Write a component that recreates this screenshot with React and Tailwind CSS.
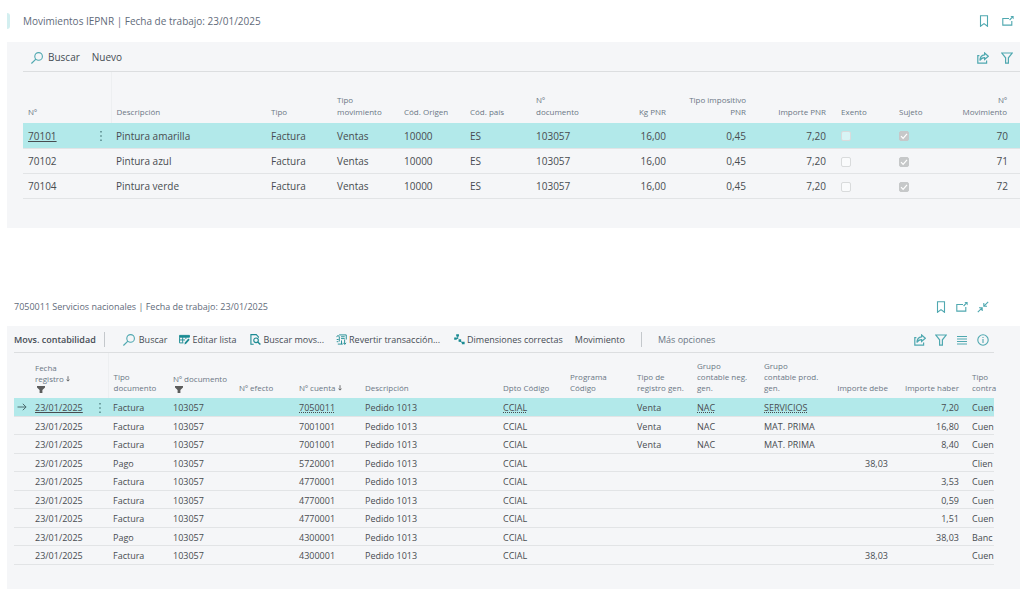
import clsx from 'clsx'

const entries = [
  { no: '70101', description: 'Pintura amarilla', entryNo: '70' },
  { no: '70102', description: 'Pintura azul', entryNo: '71' },
  { no: '70104', description: 'Pintura verde', entryNo: '72' },
]

const ledger = [
  { type: 'Factura', account: '7050011', genType: 'Venta', bus: 'NAC', prod: 'SERVICIOS', credit: '7,20', balance: 'Cuen' },
  { type: 'Factura', account: '7001001', genType: 'Venta', bus: 'NAC', prod: 'MAT. PRIMA', credit: '16,80', balance: 'Cuen' },
  { type: 'Factura', account: '7001001', genType: 'Venta', bus: 'NAC', prod: 'MAT. PRIMA', credit: '8,40', balance: 'Cuen' },
  { type: 'Pago', account: '5720001', debit: '38,03', balance: 'Clien' },
  { type: 'Factura', account: '4770001', credit: '3,53', balance: 'Cuen' },
  { type: 'Factura', account: '4770001', credit: '0,59', balance: 'Cuen' },
  { type: 'Factura', account: '4770001', credit: '1,51', balance: 'Cuen' },
  { type: 'Pago', account: '4300001', credit: '38,03', balance: 'Banc' },
  { type: 'Factura', account: '4300001', debit: '38,03', balance: 'Cuen' },
]

function Icon({ children, className = 'size-3', strokeWidth = 1 }) {
  return (
    <svg
      viewBox="0 0 12 12"
      className={clsx('shrink-0', className)}
      fill="none"
      stroke="currentColor"
      strokeWidth={strokeWidth}
      aria-hidden="true"
    >
      {children}
    </svg>
  )
}

const SearchIcon = () => (
  <Icon strokeWidth={1.1}>
    <circle cx="7.6" cy="4.4" r="3.8" />
    <path d="M4.9 7.1L.4 11.5" />
  </Icon>
)

const BookmarkIcon = () => (
  <Icon strokeWidth={1.1}>
    <path d="M2.5.7h7v10.6L6 8.6l-3.5 2.7z" />
  </Icon>
)

const PopOutIcon = () => (
  <Icon strokeWidth={1.1}>
    <path d="M7 3.5H.8v6.6h9V6" />
    <path d="M7.6 5l2.6-2.6" />
    <path d="M8.4 1h3.2v3.2z" fill="currentColor" stroke="none" />
  </Icon>
)

const CollapseIcon = () => (
  <Icon strokeWidth={1.1}>
    <path d="M.8 11.2l4-4M2 6.8h3.2V10M11.2.8l-4 4M6.8 2v3.2H10" />
  </Icon>
)

const ShareIcon = () => (
  <Icon strokeWidth={1.2}>
    <path d="M2.4 3.6H.8v7.6h8.8V8.6" />
    <path d="M7.6 1l3.7 3.2-3.7 3.2V5.6C5.4 5.6 4 6.4 2.9 8.6 3 5 4.8 3 7.6 2.8z" />
  </Icon>
)

const FilterIcon = () => (
  <Icon strokeWidth={1.2}>
    <path d="M.8 1h10.4L7.4 5.8v5.4H4.6V5.8z" />
  </Icon>
)

const ListIcon = () => (
  <Icon strokeWidth={1.1}>
    <path d="M1 2.5h10M1 5h10M1 7.5h10M1 10h10" />
  </Icon>
)

const InfoIcon = () => (
  <Icon strokeWidth={1.1}>
    <circle cx="6" cy="6" r="5.2" />
    <path d="M6 5v4M6 3v1" />
  </Icon>
)

const EditListIcon = () => (
  <Icon className="size-[11px] text-[#1b8b93]">
    <path d="M.6 1.5h10.8v2H.6z" fill="currentColor" />
    <path d="M.6 3.5v6.2h4.2M.6 6.5h6M4 3.5v6M7.5 3.5v2" />
    <path d="M6 11.4l.4-2L10.2 5l1.4 1.3-3.8 4.3z" fill="currentColor" stroke="none" />
  </Icon>
)

const FindEntriesIcon = () => (
  <Icon className="size-[11px] text-[#1b8b93]" strokeWidth={1.2}>
    <path d="M4 11.2H1V.7h5.8l2.4 2.5v1" />
    <circle cx="6.6" cy="6.9" r="2.5" />
    <path d="M8.4 8.7l2.9 2.7" strokeWidth="1.6" />
  </Icon>
)

const ReverseIcon = () => (
  <Icon className="size-[11px] text-[#1b8b93]">
    <path d="M3.4 1h7.8v5M5.5 3h4M5.5 5h4M3.6 3.2v5M9.4 6v4.8M6 7v4" />
    <path d="M.6 3.4l1.6-2 1.6 2M.8 6h2M.8 8.4h1.8M2 11h5.4M8 9.6l1.5 1.8L11 9.6" />
  </Icon>
)

const DimensionsIcon = () => (
  <Icon className="size-[11px] text-[#1b8b93]">
    <path d="M4 2v3M1.6 4.8h3M5.4 7.2l4.4 2.6" />
    <path d="M2.4.4h3v2.4h-3zM.2 3.8h2.8v2.4H.2zM5 5.8h2.8v2.6H5zM8.6 8.4h3v2.8h-3z" fill="currentColor" stroke="none" />
  </Icon>
)

const FunnelMark = () => (
  <svg viewBox="0 0 8 7" className="mt-0.5 ml-0.5 h-[7px] w-2" aria-hidden="true">
    <path d="M0 0h8v1.4L5.4 4v3H2.6V4L0 1.4z" fill="#5c5c5c" />
  </svg>
)

const SortArrow = () => (
  <svg viewBox="0 0 5 7" className="ml-0.5 inline h-1.5 w-1" fill="none" stroke="#505050" aria-hidden="true">
    <path d="M2.5 0v6M.5 4.2l2 2 2-2" />
  </svg>
)

const RowArrow = () => (
  <svg viewBox="0 0 10 8" className="mx-auto h-2 w-2.5" fill="none" stroke="#4b6b6e" aria-hidden="true">
    <path d="M.5 4h8.6M5.8.8L9.1 4 5.8 7.2" />
  </svg>
)

function RowMenu() {
  return (
    <button className="flex w-1.5 justify-center" aria-label="Más acciones">
      <svg viewBox="0 0 2 10" className="h-2.5 w-0.5" fill="#3f6e70" aria-hidden="true">
        <path d="M.4 0h1.2v1.4H.4zM.4 4.3h1.2v1.4H.4zM.4 8.6h1.2V10H.4z" />
      </svg>
    </button>
  )
}

function IconButton({ label, children }) {
  return (
    <button aria-label={label} className="text-[#4fa8b0]">
      {children}
    </button>
  )
}

function Action({ icon, children, className }) {
  return (
    <button className={clsx('flex items-center whitespace-nowrap', className)}>
      {icon}
      {children}
    </button>
  )
}

function Th({ children, className }) {
  return <th className={clsx('px-[5px] align-bottom font-normal', className || 'text-left')}>{children}</th>
}

function Td({ children, className }) {
  return <td className={clsx('px-[5px] pt-0.5 whitespace-nowrap', className)}>{children}</td>
}

function Check({ checked, label }) {
  return (
    <span className="grid size-2.5">
      <input
        type="checkbox"
        checked={checked}
        disabled
        aria-label={label}
        className={clsx(
          'col-start-1 row-start-1 size-2.5 appearance-none rounded-xs border',
          checked ? 'border-[#c6c8c9] bg-[#c6c8c9]' : 'border-[#d9dbdc] bg-white/50'
        )}
      />
      {checked && (
        <svg viewBox="0 0 10 10" className="col-start-1 row-start-1 size-2.5" fill="none" stroke="#fff" aria-hidden="true">
          <path d="M2 5.2l2.1 2.1L8 2.8" strokeWidth="1.2" />
        </svg>
      )}
    </span>
  )
}

function PlasticTaxEntries() {
  return (
    <section>
      <header className="flex h-[42px] items-center justify-between pr-1.5">
        <div className="flex items-center">
          <span className="ml-[7px] h-4 w-[3px] rounded-r-full bg-[#d3eff0]" />
          <h1 className="ml-[13px] text-[10px] text-[#5f6b7a]">Movimientos IEPNR | Fecha de trabajo: 23/01/2025</h1>
        </div>
        <div className="flex gap-3">
          <IconButton label="Marcador"><BookmarkIcon /></IconButton>
          <IconButton label="Abrir en ventana nueva"><PopOutIcon /></IconButton>
        </div>
      </header>

      <div className="ml-[7px] bg-[#f5f6f8] pb-[29px] pl-4">
        <div className="flex h-[30px] items-center justify-between border-b border-[#dcdee0] pt-0.5 pr-[7px] pl-2 text-[10px]">
          <div className="flex gap-3 text-[#454c54]">
            <Action className="gap-[5px]" icon={<span className="text-[#4fa8b0]"><SearchIcon /></span>}>Buscar</Action>
            <Action>Nuevo</Action>
          </div>
          <div className="flex gap-3">
            <IconButton label="Compartir"><ShareIcon /></IconButton>
            <IconButton label="Filtrar"><FilterIcon /></IconButton>
          </div>
        </div>

        <table className="w-full table-fixed text-[10px] text-[#484c50]">
          <colgroup>
            <col className="w-[70px]" />
            <col className="w-[18px]" />
            <col />
            <col className="w-[66px]" />
            <col className="w-[67px]" />
            <col className="w-[66px]" />
            <col className="w-[66px]" />
            <col className="w-[65px]" />
            <col className="w-[75px]" />
            <col className="w-[80px]" />
            <col className="w-[80px]" />
            <col className="w-[63px]" />
            <col className="w-[52px]" />
            <col className="w-[74px]" />
          </colgroup>
          <thead>
            <tr className="h-[51px] text-[8px] leading-3 text-[#6b7685] [&>th]:pb-[5px]">
              <Th>Nº</Th>
              <Th className="border-r border-[#edeff1]" />
              <Th>Descripción</Th>
              <Th>Tipo</Th>
              <Th>Tipo<br />movimiento</Th>
              <Th>Cód. Origen</Th>
              <Th>Cód. país</Th>
              <Th>Nº<br />documento</Th>
              <Th className="text-right">Kg PNR</Th>
              <Th className="text-right whitespace-nowrap">Tipo impositivo<br />PNR</Th>
              <Th className="text-right">Importe PNR</Th>
              <Th className="pl-2.5 text-left">Exento</Th>
              <Th>Sujeto</Th>
              <Th className="pr-[13px] text-right">Nº<br />Movimiento</Th>
            </tr>
          </thead>
          <tbody>
            {entries.map((entry, i) => (
              <tr key={entry.no} className={clsx('h-[25px] border-b border-[#e2e4e6]', i === 0 && 'bg-[#b2e9ea]')}>
                <Td>{i === 0 ? <a href="#70101" className="underline">{entry.no}</a> : entry.no}</Td>
                <Td>{i === 0 && <RowMenu />}</Td>
                <Td>{entry.description}</Td>
                <Td>Factura</Td>
                <Td>Ventas</Td>
                <Td>10000</Td>
                <Td>ES</Td>
                <Td>103057</Td>
                <Td className="text-right">16,00</Td>
                <Td className="text-right">0,45</Td>
                <Td className="text-right">7,20</Td>
                <Td className="pl-2.5"><Check checked={false} label={`Exento ${entry.no}`} /></Td>
                <Td><Check checked label={`Sujeto ${entry.no}`} /></Td>
                <Td className="pr-3 text-right">{entry.entryNo}</Td>
              </tr>
            ))}
          </tbody>
        </table>
      </div>
    </section>
  )
}

function LedgerEntries() {
  const link = 'underline decoration-dotted underline-offset-1'

  return (
    <section className="mt-[60px]">
      <header className="flex h-[38px] items-center justify-between pr-[31px] pl-3.5">
        <h2 className="text-[9px] text-[#5f6b7a]">7050011 Servicios nacionales | Fecha de trabajo: 23/01/2025</h2>
        <div className="flex gap-[9px]">
          <IconButton label="Marcador"><BookmarkIcon /></IconButton>
          <IconButton label="Abrir en ventana nueva"><PopOutIcon /></IconButton>
          <IconButton label="Contraer"><CollapseIcon /></IconButton>
        </div>
      </header>

      <div className="ml-[7px] bg-[#f5f6f8] pr-[26px] pb-[25px] pl-[7px]">
        <div className="flex h-[27px] items-center justify-between border-b border-[#dcdee0] pt-0.5 pr-[5px] text-[9px] text-[#454c54]">
          <div className="flex items-center">
            <h3 className="font-semibold whitespace-nowrap">Movs. contabilidad</h3>
            <span className="mr-[18px] ml-2 h-[15px] w-px bg-[#c4c8cc]" />
            <Action className="mr-3 gap-1" icon={<span className="text-[#4fa8b0]"><SearchIcon /></span>}>Buscar</Action>
            <Action className="mr-3.5 gap-0.5" icon={<EditListIcon />}>Editar lista</Action>
            <Action className="mr-3 gap-0.5" icon={<FindEntriesIcon />}>Buscar movs...</Action>
            <Action className="mr-3.5 gap-0.5" icon={<ReverseIcon />}>Revertir transacción...</Action>
            <Action className="mr-3 gap-0.5" icon={<DimensionsIcon />}>Dimensiones correctas</Action>
            <Action>Movimiento</Action>
            <span className="mx-4 h-[15px] w-px bg-[#c4c8cc]" />
            <Action className="text-[#6b7685]">Más opciones</Action>
          </div>
          <div className="flex gap-[9px]">
            <IconButton label="Compartir"><ShareIcon /></IconButton>
            <IconButton label="Filtrar"><FilterIcon /></IconButton>
            <IconButton label="Vista de lista"><ListIcon /></IconButton>
            <IconButton label="Información"><InfoIcon /></IconButton>
          </div>
        </div>

        <table className="w-full table-fixed text-[9px] text-[#484c50]">
          <colgroup>
            <col className="w-4" />
            <col className="w-[62px]" />
            <col className="w-4" />
            <col className="w-[60px]" />
            <col className="w-[66px]" />
            <col className="w-[60px]" />
            <col className="w-[66px]" />
            <col />
            <col className="w-[67px]" />
            <col className="w-[67px]" />
            <col className="w-[60px]" />
            <col className="w-[67px]" />
            <col className="w-[67px]" />
            <col className="w-[67px]" />
            <col className="w-[71px]" />
            <col className="w-[30px]" />
          </colgroup>
          <thead>
            <tr className="h-[45px] text-[8px] leading-[11px] text-[#6b7685] [&>th]:pb-[5px] [&>th]:whitespace-nowrap">
              <Th />
              <Th>Fecha<br />registro<SortArrow /><FunnelMark /></Th>
              <Th className="border-r border-[#edeff1]" />
              <Th>Tipo<br />documento</Th>
              <Th>Nº documento<FunnelMark /></Th>
              <Th>Nº efecto</Th>
              <Th>Nº cuenta<SortArrow /></Th>
              <Th>Descripción</Th>
              <Th>Dpto Código</Th>
              <Th>Programa<br />Código</Th>
              <Th>Tipo de<br />registro gen.</Th>
              <Th>Grupo<br />contable neg.<br />gen.</Th>
              <Th>Grupo<br />contable prod.<br />gen.</Th>
              <Th className="text-right">Importe debe</Th>
              <Th className="text-right">Importe haber</Th>
              <Th className="pr-0 pl-2 text-left">Tipo<br />contra</Th>
            </tr>
          </thead>
          <tbody>
            {ledger.map((row, i) => {
              const active = i === 0
              return (
                <tr
                  key={i}
                  className={clsx('h-[18px] border-b border-[#e2e4e6] odd:h-[19px]', active && 'bg-[#b2e9ea]')}
                >
                  <td>{active && <RowArrow />}</td>
                  <Td>{active ? <a href="#mov" className="underline">23/01/2025</a> : '23/01/2025'}</Td>
                  <Td>{active && <RowMenu />}</Td>
                  <Td>{row.type}</Td>
                  <Td>103057</Td>
                  <Td />
                  <Td>{active ? <a href="#cuenta" className={link}>{row.account}</a> : row.account}</Td>
                  <Td>Pedido 1013</Td>
                  <Td>{active ? <a href="#dpto" className={link}>CCIAL</a> : 'CCIAL'}</Td>
                  <Td />
                  <Td>{row.genType}</Td>
                  <Td>{active ? <a href="#neg" className={link}>{row.bus}</a> : row.bus}</Td>
                  <Td>{active ? <a href="#prod" className={link}>{row.prod}</a> : row.prod}</Td>
                  <Td className="text-right">{row.debit}</Td>
                  <Td className="text-right">{row.credit}</Td>
                  <Td className="pr-0 pl-2">{row.balance}</Td>
                </tr>
              )
            })}
          </tbody>
        </table>
      </div>
    </section>
  )
}

export default function App() {
  return (
    <main className="min-h-screen overflow-x-hidden bg-white font-['Open_Sans','Noto_Sans',sans-serif]">
      <PlasticTaxEntries />
      <LedgerEntries />
    </main>
  )
}
